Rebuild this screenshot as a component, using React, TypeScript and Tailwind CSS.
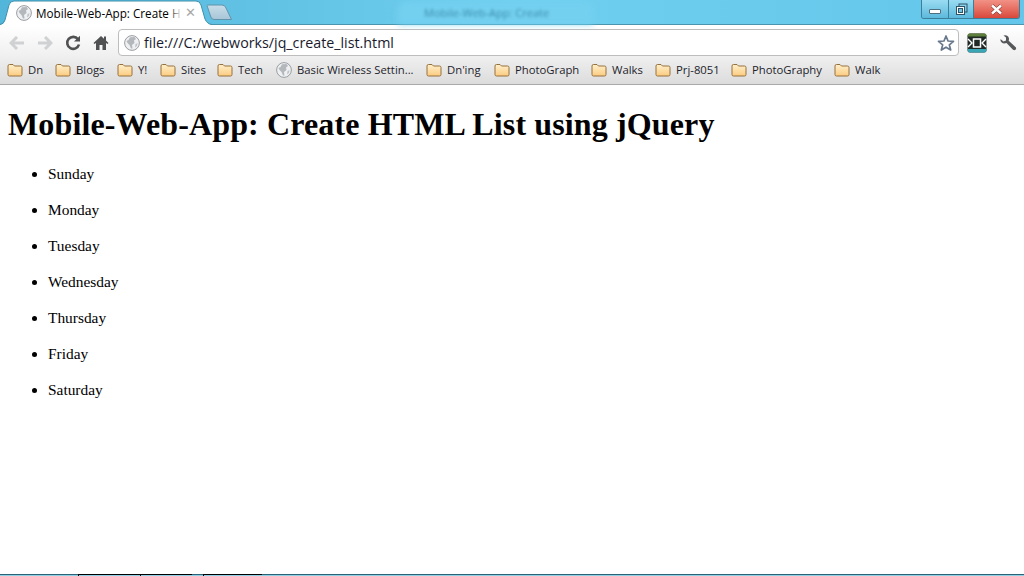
import React from 'react';

const uiFont = "font-['Open_Sans','Noto_Sans',sans-serif]";

interface Bookmark {
  label: string;
  globe?: boolean;
  width: string;
}

const bookmarks: Bookmark[] = [
  { label: 'Dn', width: 'w-[48px]' },
  { label: 'Blogs', width: 'w-[62px]' },
  { label: 'Y!', width: 'w-[43px]' },
  { label: 'Sites', width: 'w-[57px]' },
  { label: 'Tech', width: 'w-[59px]' },
  { label: 'Basic Wireless Settin...', globe: true, width: 'w-[150px]' },
  { label: "Dn'ing", width: 'w-[68px]' },
  { label: 'PhotoGraph', width: 'w-[97px]' },
  { label: 'Walks', width: 'w-[64px]' },
  { label: 'Prj-8051', width: 'w-[76px]' },
  { label: 'PhotoGraphy', width: 'w-[103px]' },
  { label: 'Walk', width: 'w-[60px]' },
];

const days = ['Sunday', 'Monday', 'Tuesday', 'Wednesday', 'Thursday', 'Friday', 'Saturday'];

function Globe({ size = 16 }: { size?: number }) {
  return (
    <svg width={size} height={size} viewBox="0 0 16 16" className="shrink-0">
      <circle cx="8" cy="8" r="7.4" fill="#eef0f2" stroke="#9a9da1" strokeWidth="1" />
      <path d="M6 2.2 L10.5 2 L12 4 L10 5.5 L10.5 8 L8 10 L8.5 13.5 L7 13.5 L5.5 10 L3.5 8 L2.5 6 L4.5 5 Z" fill="#b4b8bc" />
      <path d="M11.5 9 L13.6 8 L13 11 L11 12.5 Z" fill="#c2c5c8" />
    </svg>
  );
}

function Folder() {
  return (
    <svg width="16" height="14" viewBox="0 0 16 14" className="shrink-0">
      <defs>
        <linearGradient id="folderFill" x1="0" y1="0" x2="0" y2="1">
          <stop offset="0" stopColor="#fff0cc" />
          <stop offset="1" stopColor="#fbcb7f" />
        </linearGradient>
      </defs>
      <path
        d="M1 3 Q1 1.5 2.5 1.5 H6 L7.5 3 H13.5 Q15 3 15 4.5 V11.5 Q15 13 13.5 13 H2.5 Q1 13 1 11.5 Z"
        fill="url(#folderFill)"
        stroke="#96703c"
        strokeWidth="1"
      />
    </svg>
  );
}

function Arrow({ flip }: { flip?: boolean }) {
  return (
    <svg width="16" height="14" viewBox="0 0 16 14" className={flip ? 'shrink-0 -scale-x-100' : 'shrink-0'}>
      <path d="M8 1 L2 7 L8 13 M2.5 7 H15" fill="none" stroke="#cfd1d3" strokeWidth="3" />
    </svg>
  );
}

function WindowControls() {
  return (
    <div className="flex h-[19px] mr-[4px] border border-t-0 border-[#3d7f99] rounded-b-[3px] overflow-hidden">
      <div className="w-[27px] flex items-center justify-center border-r border-[#3d7f99] bg-gradient-to-b from-[#9adcf2] to-[#5cb9dc]">
        <div className="w-[12px] h-[5px] mt-[5px] bg-white border border-[#4d6f80] rounded-[1px]" />
      </div>
      <div className="w-[25px] flex items-center justify-center border-r border-[#3d7f99] bg-gradient-to-b from-[#9adcf2] to-[#5cb9dc]">
        <svg width="13" height="13" viewBox="0 0 13 13">
          <rect x="4" y="1" width="8" height="8" fill="none" stroke="#2f5366" strokeWidth="1" />
          <rect x="1.5" y="3.5" width="8" height="8" fill="#fff" stroke="#2f5366" strokeWidth="1" />
          <rect x="3.5" y="5.5" width="4" height="4" fill="#6fc4e2" stroke="#2f5366" strokeWidth="1" />
        </svg>
      </div>
      <div className="w-[45px] flex items-center justify-center bg-gradient-to-b from-[#f29186] to-[#d8473b]">
        <svg width="13" height="11" viewBox="0 0 13 11">
          <path d="M2 1.5 L11 9.5 M11 1.5 L2 9.5" stroke="#5a1c18" strokeWidth="3.6" />
          <path d="M2 1.5 L11 9.5 M11 1.5 L2 9.5" stroke="#fff" strokeWidth="2.6" />
        </svg>
      </div>
    </div>
  );
}

function TitleBar() {
  return (
    <div className="relative h-[25px] flex justify-end bg-gradient-to-r from-[#52b5da] via-[#70cfef] to-[#63c6ea] border-b border-[#4a95ad]">
      {/* ghost of the window behind the glass */}
      <div className="absolute left-[398px] top-[2px] w-[195px] h-[22px] rounded-t-[8px] bg-[#74d0ef] blur-[3px]" />
      <span className={`absolute left-[424px] top-[6px] text-[11px] leading-[14px] text-[#3a8cae] blur-[1.4px] ${uiFont}`}>
        Mobile-Web-App: Create
      </span>

      {/* active tab */}
      <svg width="234" height="25" viewBox="0 0 234 25" className="absolute left-0 top-0">
        <defs>
          <linearGradient id="newTabFill" x1="0" y1="0" x2="0" y2="1">
            <stop offset="0" stopColor="#c9dde8" />
            <stop offset="1" stopColor="#a7c6d8" />
          </linearGradient>
        </defs>
        <path d="M207 5.5 Q207 5 209 5 H222 Q225 5 226 8 L231.5 19.5 H214 Q211 19.5 210.5 16 Z" fill="url(#newTabFill)" stroke="#5f94ab" strokeWidth="1" />
        <path d="M0 25 Q4 24 5 20 L9 5 Q10 1 14 1 H196 Q200 1 201 5 L205 19 Q207 24 212 25 Z" fill="#ffffff" />
        <path d="M0 24.5 Q4 24 5 20 L9 5 Q10 1 14 1 H196 Q200 1 201 5 L205 19 Q207 24 212 24.5" fill="none" stroke="#3f90ad" strokeWidth="1" />
      </svg>
      <div className="absolute left-[16px] top-[5px] h-[16px] flex items-center leading-[16px]">
        <Globe />
        <div className="relative w-[146px] h-[16px] ml-[4px] whitespace-nowrap">
          <span className={`block text-[11.7px] leading-[16px] text-black ${uiFont}`}>Mobile-Web-App: Create H</span>
          <div className="absolute right-0 top-0 bottom-0 w-[14px] bg-gradient-to-r from-transparent to-white" />
        </div>
        <span className="ml-[3px] text-[13px] leading-[14px] text-[#a8a8a8] font-['Liberation_Sans',sans-serif]">✕</span>
      </div>

      <WindowControls />
    </div>
  );
}

function Toolbar() {
  return (
    <div className="h-[32px] flex items-center pt-[3px] pl-[9px] bg-gradient-to-b from-white to-[#efefef]">
      <Arrow />
      <div className="ml-[12px]">
        <Arrow flip />
      </div>
      <svg width="16" height="16" viewBox="0 0 16 16" className="ml-[12px] shrink-0">
        <path d="M13 4.2 A6 6 0 1 0 14 9.5" fill="none" stroke="#4f5152" strokeWidth="2.6" />
        <path d="M9 6.5 H15 V0.8 Z" fill="#4f5152" />
      </svg>
      <svg width="16" height="16" viewBox="0 0 16 16" className="ml-[12px] shrink-0">
        <path d="M8 1 L0.5 8 L1.5 9 L3 8 V15 H6.5 V10 H9.5 V15 H13 V8 L14.5 9 L15.5 8 L13 5.6 V1.5 H11 V3.8 Z" fill="#4f5152" />
      </svg>
      <div className="ml-[9px] w-[841px] h-[27px] flex items-center pl-[5px] pr-[3px] bg-white border border-[#bdbdbd] rounded-[4px]">
        <Globe />
        <span className={`ml-[4px] flex-1 text-[14.25px] leading-[18px] text-[#1a1a2e] ${uiFont}`}>
          file:///C:/webworks/jq_create_list.html
        </span>
        <svg width="18" height="18" viewBox="0 0 18 18" className="shrink-0">
          <path
            d="M9 2 L11 7 L16.5 7.3 L12.3 10.8 L13.7 16 L9 13.2 L4.3 16 L5.7 10.8 L1.5 7.3 L7 7 Z"
            fill="#fff"
            stroke="#67778c"
            strokeWidth="1.7"
            strokeLinejoin="round"
          />
        </svg>
      </div>
      <svg width="20" height="20" viewBox="0 0 20 20" className="ml-[8px] shrink-0">
        <rect x="0.5" y="0.5" width="19" height="19" rx="2.5" fill="#1f2a26" />
        <path d="M0.5 3.5 Q0.5 0.5 3 0.5 H17 Q19.5 0.5 19.5 3.5 Z" fill="#5d7f3b" />
        <path d="M0.5 16 H19.5 Q19.5 19.5 17 19.5 H3 Q0.5 19.5 0.5 16 Z" fill="#3aa6b5" />
        <path d="M1 6 L5 10 L1 14 M19 6 L15 10 L19 14" fill="none" stroke="#fff" strokeWidth="1.4" />
        <rect x="6.5" y="6" width="7" height="8" fill="none" stroke="#fff" strokeWidth="1.5" />
      </svg>
      <svg width="18" height="18" viewBox="0 0 18 18" className="ml-[12px] shrink-0">
        <path
          d="M1.5 5 L4.5 7.5 L7 6.5 L7 3.5 L4.5 1.5 Q8 0.5 9.5 3 Q10.5 5 9.7 6.8 L17 13.5 Q17.5 15 16.5 15.8 Q15.5 16.5 14 15.8 L7.5 9 Q4.5 10 2.7 8.5 Q1 7 1.5 5 Z"
          fill="#55585a"
        />
      </svg>
    </div>
  );
}

function BookmarksBar() {
  return (
    <div className={`h-[28px] flex items-center pb-px pl-[7px] bg-gradient-to-b from-[#efefef] to-[#dcdcdc] border-b border-[#a9a9a9] ${uiFont}`}>
      {bookmarks.map((b) => (
        <div key={b.label} className={`flex items-center shrink-0 ${b.width}`}>
          {b.globe ? <Globe /> : <Folder />}
          <span className="ml-[5px] text-[11.3px] leading-[16px] text-[#1d1d2b] whitespace-nowrap">{b.label}</span>
        </div>
      ))}
    </div>
  );
}

export default function App() {
  return (
    <div className="relative w-[1024px] h-[576px] overflow-hidden bg-white flex flex-col">
      <TitleBar />
      <Toolbar />
      <BookmarksBar />

      <main className="flex-1 px-[8px] font-['Liberation_Serif',serif] text-black">
        <h1 className="mt-[21px] mb-[22px] text-[32px] leading-[37px] font-bold tracking-[0.13px]">Mobile-Web-App: Create HTML List using jQuery</h1>
        <ul className="pl-[40px] list-disc">
          {days.map((day) => (
            <li key={day} className="mb-[18px] text-[15.4px] leading-[18px]">
              {day}
            </li>
          ))}
        </ul>
      </main>

      {/* taskbar peeking in at the bottom edge */}
      <div className="h-[2px] flex shrink-0 bg-[#8fd0e4] border-t border-[#2b6478]">
        <div className="ml-[78px] w-[62px] border-l border-t border-black -mt-px" />
        <div className="w-[52px] border-l border-t border-black -mt-px" />
        <div className="ml-[11px] w-[59px] border-l border-t border-black -mt-px" />
      </div>
    </div>
  );
}
